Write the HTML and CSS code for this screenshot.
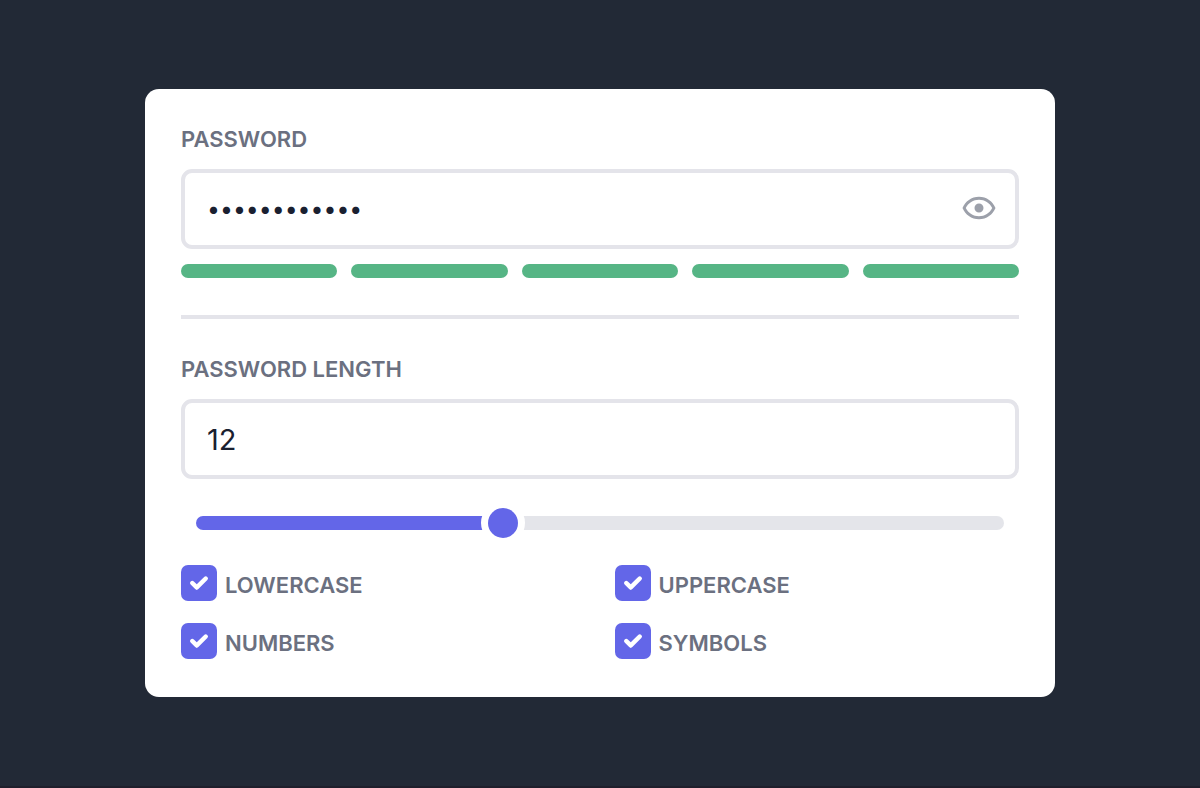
FILE: index.html
```
<!DOCTYPE html>
<html lang="en">
<head>
    <meta charset="UTF-8">
    <meta name="viewport" content="width=device-width, initial-scale=1.0">
    <title>Password Generator</title>
    <link rel="stylesheet" href="styles.css">
</head>
<body>
    <main class="card">
        <div class="field">
            <label for="password">PASSWORD</label>
            <div class="password-box">
                <input class="text-input password" type="password" id="password" value="k7#Rw!p2Zx&amp;Q">
                <button class="toggle-btn" id="toggle-password" type="button" aria-label="Show password">
                    <svg viewBox="0 0 24 24" width="36" height="36" fill="currentColor">
                        <path d="M12,9A3,3 0 0,1 15,12A3,3 0 0,1 12,15A3,3 0 0,1 9,12A3,3 0 0,1 12,9M12,4.5C17,4.5 21.27,7.61 23,12C21.27,16.39 17,19.5 12,19.5C7,19.5 2.73,16.39 1,12C2.73,7.61 7,4.5 12,4.5M3.18,12C4.83,15.36 8.24,17.5 12,17.5C15.76,17.5 19.17,15.36 20.82,12C19.17,8.64 15.76,6.5 12,6.5C8.24,6.5 4.83,8.64 3.18,12Z"/>
                    </svg>
                </button>
            </div>
        </div>

        <div class="strength">
            <span></span>
            <span></span>
            <span></span>
            <span></span>
            <span></span>
        </div>

        <hr>

        <div class="field">
            <label for="length">PASSWORD LENGTH</label>
            <input class="text-input" type="text" inputmode="numeric" id="length" value="12">
        </div>

        <input class="slider" type="range" id="slider" min="0" max="32" value="12" aria-label="Password length">

        <div class="options">
            <label class="option"><input type="checkbox" checked> LOWERCASE</label>
            <label class="option"><input type="checkbox" checked> UPPERCASE</label>
            <label class="option"><input type="checkbox" checked> NUMBERS</label>
            <label class="option"><input type="checkbox" checked> SYMBOLS</label>
        </div>
    </main>

    <script>
        const password = document.getElementById('password');
        const lengthInput = document.getElementById('length');
        const slider = document.getElementById('slider');

        function paintSlider()
        {
            slider.style.setProperty('--fill', (slider.value / slider.max * 100) + '%');
        }

        document.getElementById('toggle-password').addEventListener('click', () =>
        {
            password.type = password.type === 'password' ? 'text' : 'password';
        });

        slider.addEventListener('input', () =>
        {
            lengthInput.value = slider.value;
            paintSlider();
        });

        lengthInput.addEventListener('input', () =>
        {
            slider.value = lengthInput.value;
            paintSlider();
        });

        paintSlider();
    </script>
</body>
</html>
```
FILE: styles.css
```
*
{
    margin: 0;
    padding: 0;
    box-sizing: border-box;
}

body
{
    display: flex;
    justify-content: center;
    align-items: center;
    min-height: 100vh;
    background-color: #222936;
    border-bottom: 2px solid #1f1f2c;
    color: #6b7080;
    font-family: Inter, "Liberation Sans", sans-serif;
}

.card
{
    width: 76%;
    max-width: 910px;
    padding: 36px 36px 38px;
    border-radius: 14px;
    background-color: #fff;
}

label
{
    font-size: 22px;
    font-weight: 600;
    line-height: 29px;
}

.field
{
    display: flex;
    flex-direction: column;
    gap: 15px;
}

.text-input
{
    width: 100%;
    height: 80px;
    padding: 0 22px;
    border: 4px solid #e4e4ea;
    border-radius: 11px;
    background-color: transparent;
    color: #1a2030;
    font-family: inherit;
    font-size: 29px;
    outline: none;
}

.password-box
{
    position: relative;
}

.password
{
    display: block;
    padding-right: 70px;
    font-size: 23px;
}

/* Sits over the right end of the password input */
.toggle-btn
{
    position: absolute;
    top: 21px;
    right: 22px;
    height: 36px;
    border: none;
    background: none;
    color: #9ca0aa;
    cursor: pointer;
}

.toggle-btn svg
{
    display: block;
}

/* Strength bars */
.strength
{
    display: grid;
    grid-template-columns: repeat(5, 1fr);
    gap: 14px;
    margin-top: 15px;
}

.strength span
{
    height: 14px;
    border-radius: 7px;
    background-color: #56b585;
}

hr
{
    height: 4px;
    margin: 37px 0 36px;
    border: none;
    background-color: #e4e4ea;
}

/* Slider */
.slider
{
    display: block;
    appearance: none;
    width: calc(100% - 30px);
    height: 30px;
    margin: 29px auto 27px;
    background: none;
    cursor: pointer;
}

.slider::-webkit-slider-runnable-track
{
    height: 14px;
    border-radius: 7px;
    background: linear-gradient(to right, #6366e8 var(--fill), #e4e5ea var(--fill));
}

.slider::-webkit-slider-thumb
{
    appearance: none;
    width: 30px;
    height: 30px;
    margin-top: -8px;
    border-radius: 50%;
    background-color: #6366e8;
    box-shadow: 0 0 0 7px #fff;
}

/* Character options */
.options
{
    display: grid;
    grid-template-columns: 1fr 1fr;
    gap: 22px 29px;
}

.option
{
    display: flex;
    align-items: flex-end;
    gap: 8px;
    line-height: 32px;
    cursor: pointer;
}

.option input
{
    appearance: none;
    width: 36px;
    height: 36px;
    border: 2px solid #e4e4ea;
    border-radius: 7px;
}

.option input:checked
{
    border: none;
    background: #6366e8 url("data:image/svg+xml,%3Csvg viewBox='0 0 16 16' fill='white' xmlns='http://www.w3.org/2000/svg'%3E%3Cpath d='M5.707 7.293a1 1 0 0 0-1.414 1.414l2 2a1 1 0 0 0 1.414 0l4-4a1 1 0 0 0-1.414-1.414L7 8.586l-1.293-1.293z'/%3E%3C/svg%3E") center / 100% no-repeat;
}
```
